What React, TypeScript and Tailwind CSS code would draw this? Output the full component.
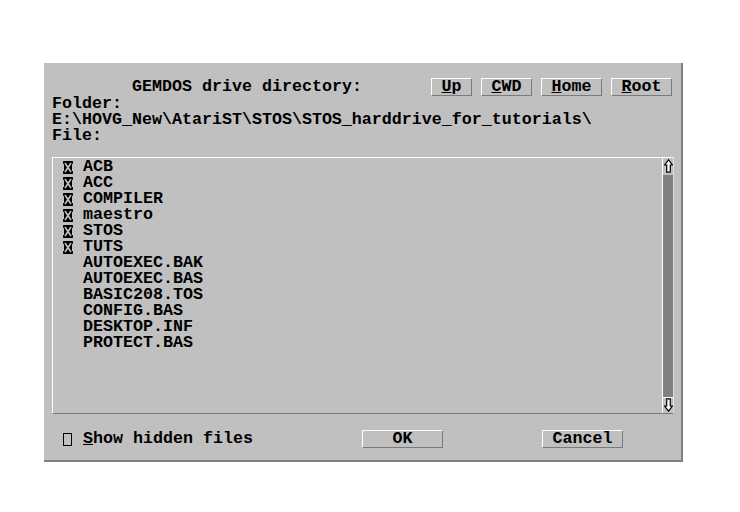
import React from "react";

const folders = ["ACB", "ACC", "COMPILER", "maestro", "STOS", "TUTS"];
const files = [
  "AUTOEXEC.BAK",
  "AUTOEXEC.BAS",
  "BASIC208.TOS",
  "CONFIG.BAS",
  "DESKTOP.INF",
  "PROTECT.BAS",
];

function FolderMark() {
  return (
    <svg width="10" height="13" viewBox="0 0 10 13" className="block">
      <rect x="0" y="0" width="10" height="13" fill="#000" />
      <path d="M2 2 L8 11 M8 2 L2 11" stroke="#c0c0c0" strokeWidth="1.6" />
      <rect x="0" y="3" width="1" height="7" fill="#c0c0c0" />
      <rect x="9" y="3" width="1" height="7" fill="#c0c0c0" />
    </svg>
  );
}

function Arrow({ down }: { down?: boolean }) {
  return (
    <svg width="9" height="14" viewBox="0 0 9 14" className={down ? "block rotate-180" : "block"}>
      <path
        d="M4.5 0.8 L8.4 6 L6.3 6 L6.3 13.2 L2.7 13.2 L2.7 6 L0.6 6 Z"
        fill="#fff"
        stroke="#000"
        strokeWidth="1.2"
      />
    </svg>
  );
}

function Btn({ w, children }: { w: string; children: React.ReactNode }) {
  return (
    <div
      className={`${w} h-[18px] flex items-center justify-center bg-[#c0c0c0] border-t border-l border-t-white border-l-white border-r border-b border-r-[#7a7a7a] border-b-[#7a7a7a]`}
    >
      <span className="leading-[16px]">{children}</span>
    </div>
  );
}

export default function App() {
  return (
    <div
      className="w-[740px] h-[512px] bg-white pt-[63px] pl-[44px] text-black"
      style={{ fontFamily: '"Liberation Mono", "DejaVu Sans Mono", monospace' }}
    >
      <div className="w-[639px] h-[399px] bg-[#c0c0c0] border-r-2 border-b-2 border-[#7f7f7f] px-[8px] pt-[14px] text-[16.67px] leading-[16px] font-bold">
        {/* Header */}
        <div className="h-[19px] flex items-start">
          <div className="ml-[80px] mt-[2px]">GEMDOS drive directory:</div>
          <div className="ml-auto mr-[1px] mt-[1px] flex gap-[9px]">
            <Btn w="w-[41px]">
              <span className="underline">U</span>p
            </Btn>
            <Btn w="w-[51px]">
              <span className="underline">C</span>WD
            </Btn>
            <Btn w="w-[61px]">
              <span className="underline">H</span>ome
            </Btn>
            <Btn w="w-[61px]">
              <span className="underline">R</span>oot
            </Btn>
          </div>
        </div>
        <div>Folder:</div>
        <div>E:\HOVG_New\AtariST\STOS\STOS_harddrive_for_tutorials\</div>
        <div>File:</div>

        {/* List */}
        <div className="mt-[13px] w-[622px] h-[257px] flex border-t border-l border-t-white border-l-white border-b border-b-[#7a7a7a] border-r border-r-[#dcdcdc]">
          <div className="flex-1 pl-[10px] pt-[1px]">
            {folders.map((f) => (
              <div key={f} className="h-[16px] flex items-center gap-[10px]">
                <FolderMark />
                <span>{f}</span>
              </div>
            ))}
            {files.map((f) => (
              <div key={f} className="h-[16px] flex items-center pl-[20px]">
                {f}
              </div>
            ))}
          </div>
          <div className="w-[11px] flex flex-col border-l border-l-white">
            <div className="h-[17px] flex items-start justify-center pt-[1px] bg-[#c0c0c0]">
              <Arrow />
            </div>
            <div className="flex-1 bg-[#808080]" />
            <div className="h-[16px] flex items-end justify-center pb-[1px] bg-[#c0c0c0] border-t border-t-white">
              <Arrow down />
            </div>
          </div>
        </div>

        {/* Bottom row */}
        <div className="mt-[16px] h-[18px] flex items-center">
          <div className="w-[310px] flex items-center">
            <div className="ml-[11px] w-[9px] h-[13px] border border-black" />
            <div className="ml-[11px]">
              <span className="underline">S</span>how hidden files
            </div>
          </div>
          <Btn w="w-[81px]">OK</Btn>
          <div className="w-[99px]" />
          <Btn w="w-[81px]">Cancel</Btn>
        </div>
      </div>
    </div>
  );
}
